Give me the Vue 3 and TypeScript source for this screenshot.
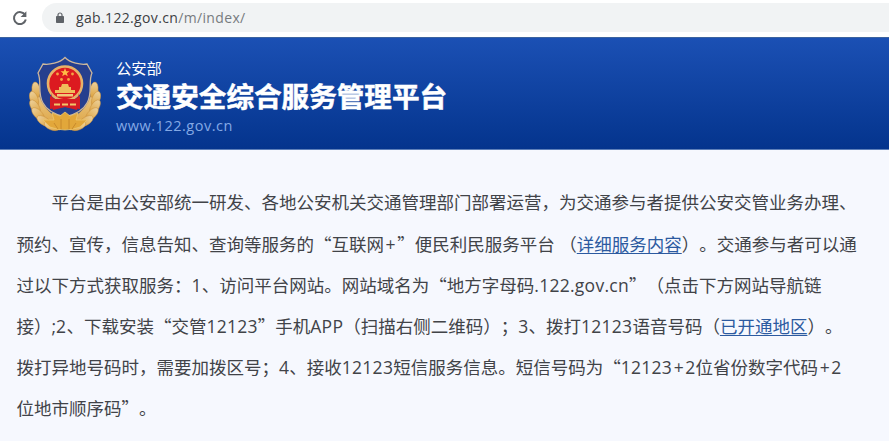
<script setup lang="ts">
interface Segment {
  text: string
  kind?: 'quote' | 'link' | 'latin' | 'plus'
}

const source: Segment[][] = [
  [{ text: '平台是由公安部统一研发、各地公安机关交通管理部门部署运营，为交通参与者提供公安交管业务办理、' }],
  [
    { text: '预约、宣传，信息告知、查询等服务的“互联网+”便民利民服务平台 （' },
    { text: '详细服务内容', kind: 'link' },
    { text: '）。交通参与者可以通' },
  ],
  [{ text: '过以下方式获取服务：1、访问平台网站。网站域名为“地方字母码.122.gov.cn”（点击下方网站导航链' }],
  [
    { text: '接）;2、下载安装“交管12123”手机APP（扫描右侧二维码）；3、拨打12123语音号码（' },
    { text: '已开通地区', kind: 'link' },
    { text: '）。' },
  ],
  [{ text: '拨打异地号码时，需要加拨区号；4、接收12123短信服务信息。短信号码为“12123+2位省份数字代码+2' }],
  [{ text: '位地市顺序码”。' }],
]

// Quotes, plus signs and Latin runs each get their own font or tracking.
function split(segment: Segment): Segment[] {
  if (segment.kind) return [segment]
  return segment.text
    .split(/([“”]|\+|[A-Za-z0-9.]+)/)
    .filter(text => text !== '')
    .map((text): Segment => {
      if (/^[“”]$/.test(text)) return { text, kind: 'quote' }
      if (text === '+') return { text, kind: 'plus' }
      if (/^[A-Za-z0-9.]+$/.test(text)) return { text, kind: 'latin' }
      return { text }
    })
}

const lines = source.map(line => line.flatMap(split))

const leftLeaves = [
  { x: 7, y: 34, r: -8 },
  { x: 5, y: 43, r: -20 },
  { x: 6, y: 51, r: -32 },
  { x: 9, y: 58, r: -45 },
  { x: 15, y: 65, r: -58 },
  { x: 23, y: 70, r: -70 },
]
</script>

<template>
  <div class="window">
    <div class="toolbar">
      <svg class="reload" viewBox="0 0 16 16">
        <path d="M13.2 5.1A6 6 0 1 0 13.8 9.6" fill="none" stroke="#5f6368" stroke-width="2" />
        <path d="M14.4 1.2V7H8.6Z" fill="#5f6368" />
      </svg>
      <div class="address">
        <svg class="lock" viewBox="0 0 8 11">
          <path d="M2 5V3a2 2 0 0 1 4 0v2" fill="none" stroke="#5f6368" stroke-width="1.2" />
          <rect y="4" width="8" height="7" rx="0.8" fill="#5f6368" />
        </svg>
        <span class="url">gab.122.gov.cn<span class="path">/m/index/</span></span>
      </div>
    </div>

    <header class="banner">
      <svg class="emblem" viewBox="0 0 72 76">
        <defs>
          <linearGradient id="gold" x1="0" y1="0" x2="0" y2="1">
            <stop offset="0" stop-color="#ecd09a" />
            <stop offset="1" stop-color="#dda23c" />
          </linearGradient>
        </defs>
        <g fill="url(#gold)" stroke="#c98f3c" stroke-width="0.5">
          <g v-for="side in [1, -1]" :key="side" :transform="side === 1 ? '' : 'translate(72 0) scale(-1 1)'">
            <path d="M5 28Q-1 45 5 58Q13 72 31 74L36 64Q20 60 13 46Z" />
            <ellipse
              v-for="leaf in leftLeaves"
              :key="leaf.y"
              rx="4"
              ry="8"
              :transform="`translate(${leaf.x} ${leaf.y}) rotate(${leaf.r})`"
            />
          </g>
        </g>
        <path
          d="M36 1.5C31 7 20 9 14 8L9 17C13 25 8 37 14 47C18 55 28 59 36 61C44 59 54 55 58 47C64 37 59 25 63 17L58 8C52 9 41 7 36 1.5Z"
          fill="#263f8e" stroke="#cdb79c" stroke-width="1.3"
        />
        <circle cx="36" cy="27.5" r="17" fill="#dc1a20" stroke="#e8b268" stroke-width="2.6" />
        <path d="M22 37L24 44Q36 50 48 44L50 37L49.5 45.5L48 54L36 51L24 54L22.5 45.5Z" fill="#d51c24" />
        <path d="M21 40L26 43H46L51 40V53L36 51L21 53Z" fill="#d51c24" />
        <path d="M26 37V34H30V31H32L33 28H39L40 31H42V34H46V37Z" fill="#efbd5b" />
        <path d="M28 38H44V40.5H28Z" fill="#f0c878" />
        <path d="M25 48.5H31M33 48.5H39M41 48.5H47" fill="none" stroke="#f2c66a" stroke-width="2" />
        <path d="M36 12L37.2 15.2H40.5L37.9 17.2L38.8 20.3L36 18.5L33.2 20.3L34.1 17.2L31.5 15.2H34.8Z" fill="#ffbd45" />
        <g fill="#f5a545">
          <circle cx="28.5" cy="18" r="1.4" /><circle cx="43.5" cy="18" r="1.4" />
          <circle cx="32.5" cy="23.5" r="1.4" /><circle cx="39.5" cy="23.5" r="1.4" />
        </g>
        <path
          d="M36 56L41 60L49 57L47 64L58 64L51 71Q36 77 21 71L14 64L25 64L23 57L31 60Z"
          fill="#e2a73a" stroke="#edc66d" stroke-width="0.8"
        />
        <path d="M32 63V73M40 63V73M25 67L29 73M47 67L43 73" stroke="#c4872a" stroke-width="0.9" />
      </svg>
      <div class="titles">
        <div class="ministry">公安部</div>
        <h1>交通安全综合服务管理平台</h1>
        <div class="domain">www.122.gov.cn</div>
      </div>
    </header>

    <main class="intro">
      <div v-for="(line, i) in lines" :key="i" class="line"><template v-for="(seg, j) in line" :key="j"><a v-if="seg.kind === 'link'" class="link">{{ seg.text }}</a><span v-else :class="seg.kind">{{ seg.text }}</span></template></div>
    </main>
  </div>
</template>

<style>
body {
  margin: 0;
  overflow: hidden;
}
</style>

<style scoped>
.window {
  width: 889px;
  height: 441px;
  overflow: hidden;
  background: #f6f8fe;
  font-family: "Open Sans", "Noto Sans CJK SC", sans-serif;
  text-spacing-trim: space-all;
}
.toolbar {
  display: flex;
  box-sizing: border-box;
  height: 37px;
  padding: 3px 0 5px 12px;
  background: #fff;
}
.reload {
  width: 16px;
  height: 16px;
  margin-top: 7px;
}
.address {
  display: flex;
  flex: 1;
  align-items: center;
  height: 29px;
  margin-left: 14px;
  padding-left: 14px;
  border-radius: 15px 0 0 15px;
  background: #f1f3f4;
}
.lock {
  width: 8px;
  height: 11px;
}
.url {
  margin-left: 12px;
  color: #3c3e42;
  font-size: 14px;
  line-height: 29px;
  letter-spacing: 0.35px;
  white-space: nowrap;
}
.path {
  color: #777b7f;
}
.banner {
  display: flex;
  box-sizing: border-box;
  height: 113px;
  padding: 18px 0 0 29px;
  border-top: 1px solid #3c639f;
  border-bottom: 1px solid #5d7fb9;
  background: linear-gradient(#1b50b4, #04348d);
}
.emblem {
  width: 72px;
  height: 76px;
}
.titles {
  margin-left: 15px;
  color: #fff;
  white-space: nowrap;
}
.ministry {
  height: 23px;
  font-size: 15.3px;
  line-height: 24px;
}
h1 {
  height: 36px;
  margin: 0;
  font-size: 27.6px;
  font-weight: 700;
  line-height: 34px;
  -webkit-text-stroke: 0.5px #fff;
}
.domain {
  height: 22px;
  color: #84a9e5;
  font-size: 14.5px;
  line-height: 22px;
  letter-spacing: 0.52px;
}
.intro {
  padding: 31.6px 0 0 16.5px;
  color: #414348;
  font-size: 17.5px;
}
.line {
  height: 41px;
  line-height: 41px;
  white-space: pre;
}
.line:first-child {
  padding-left: 35px;
}
.quote {
  font-family: "Noto Sans CJK SC", sans-serif;
}
.latin {
  letter-spacing: 0.27px;
}
.plus {
  padding: 0 1.6px;
}
.link {
  color: #2c5aa0;
  text-decoration: underline;
  text-decoration-thickness: 1px;
  text-underline-offset: 2px;
}
</style>
